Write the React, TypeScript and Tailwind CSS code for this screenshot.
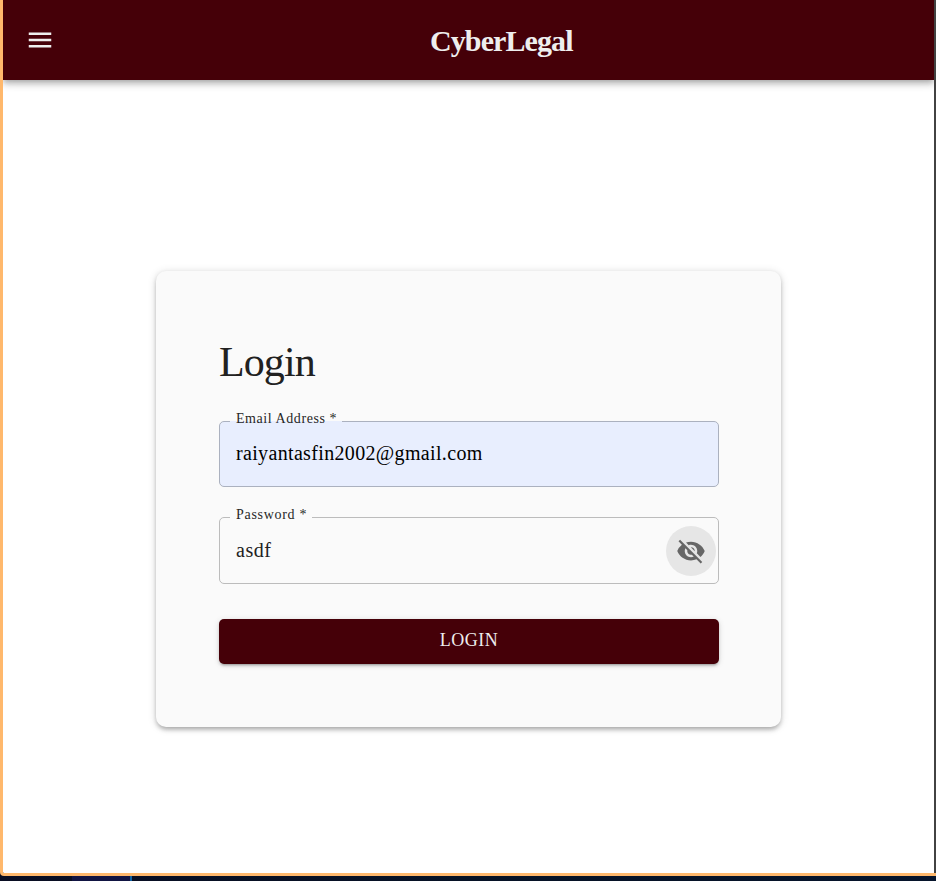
import type { ReactNode } from "react";
import { MdMenu, MdVisibilityOff } from "react-icons/md";

type FieldProps = {
  label: string;
  notch: string;
  labelSpacing: string;
  box: string;
  children: ReactNode;
};

function Field({ label, notch, labelSpacing, box, children }: FieldProps) {
  return (
    <div className={`relative flex items-center rounded-[5px] border pl-4 ${box}`}>
      <span className={`absolute -top-px left-[10px] h-px ${notch}`} />
      <label className={`absolute -top-[11px] left-4 whitespace-nowrap text-[14px] leading-4 text-[#272727] ${labelSpacing}`}>
        {label}
      </label>
      {children}
    </div>
  );
}

export default function App() {
  return (
    <div className="flex h-[881px] w-[936px] flex-col overflow-hidden bg-[#080d20] font-['Liberation_Serif',serif]">
      <div className="flex h-[876px] shrink-0 flex-col overflow-hidden rounded-bl-[4px] border-b-[3px] border-l-[3px] border-[#ffb86c]">
        <div className="flex min-h-0 flex-1 flex-col overflow-hidden border-r-2 border-r-[#424242] bg-white">
          <header className="flex h-20 shrink-0 items-center bg-[#450008] pl-[22px] text-[#eeeeee] shadow-[0_2px_5px_-1px_rgba(0,0,0,0.2),0_5px_6px_rgba(0,0,0,0.14),0_1px_12px_rgba(0,0,0,0.12)]">
            <MdMenu size={30} />
            <h1 className="ml-[375px] mt-px text-[30px] font-bold leading-10 tracking-[-0.9px]">CyberLegal</h1>
          </header>
          <main className="flex flex-1 items-center justify-center pt-[45px]">
            <section className="flex h-[456px] w-[625px] flex-col rounded-[10px] bg-[#fafafa] py-[63px] pl-[63px] pr-[62px] shadow-[0_4px_5px_-2px_rgba(0,0,0,0.2),0_2px_5px_rgba(0,0,0,0.14),0_1px_10px_rgba(0,0,0,0.12)]">
              <h2 className="h-[87px] text-[42px] leading-[56px] tracking-[-0.9px] text-[#212121]">Login</h2>
              <Field label="Email Address *" notch="w-[112px] bg-[#e8eefe]" labelSpacing="tracking-[0.57px]" box="h-[66px] border-[#abb1bf] bg-[#e8eefe]">
                <span className="-mt-[2px] text-[20px] leading-6 tracking-[0.34px] text-black">raiyantasfin2002@gmail.com</span>
              </Field>
              <Field label="Password *" notch="w-[82px] bg-[#fafafa]" labelSpacing="tracking-[0.7px]" box="mt-[30px] h-[67px] border-[#bcbcbc] bg-[#fafafa]">
                <span className="-mt-[2px] flex-1 text-[20px] leading-6 tracking-[0.5px] text-[#212121]">asdf</span>
                <button className="mr-[2px] flex size-[50px] items-center justify-center rounded-full bg-[#e6e6e6] text-[#666666]">
                  <MdVisibilityOff size={30} />
                </button>
              </Field>
              <button className="mt-[35px] flex h-[45px] items-center justify-center rounded-[5px] bg-[#450008] pb-[3px] text-[18px] tracking-[0.5px] text-[#eeeeee] shadow-[0_3px_2px_-2px_rgba(0,0,0,0.2),0_2px_3px_rgba(0,0,0,0.14),0_1px_6px_rgba(0,0,0,0.12)]">
                LOGIN
              </button>
            </section>
          </main>
        </div>
      </div>
      <div className="flex flex-1 bg-linear-to-r from-[#090d22] via-[#061225] to-[#06142b]">
        <span className="ml-[72px] w-[58px] bg-[#111442]" />
        <span className="w-[2px] bg-[#1261a0]" />
      </div>
    </div>
  );
}
